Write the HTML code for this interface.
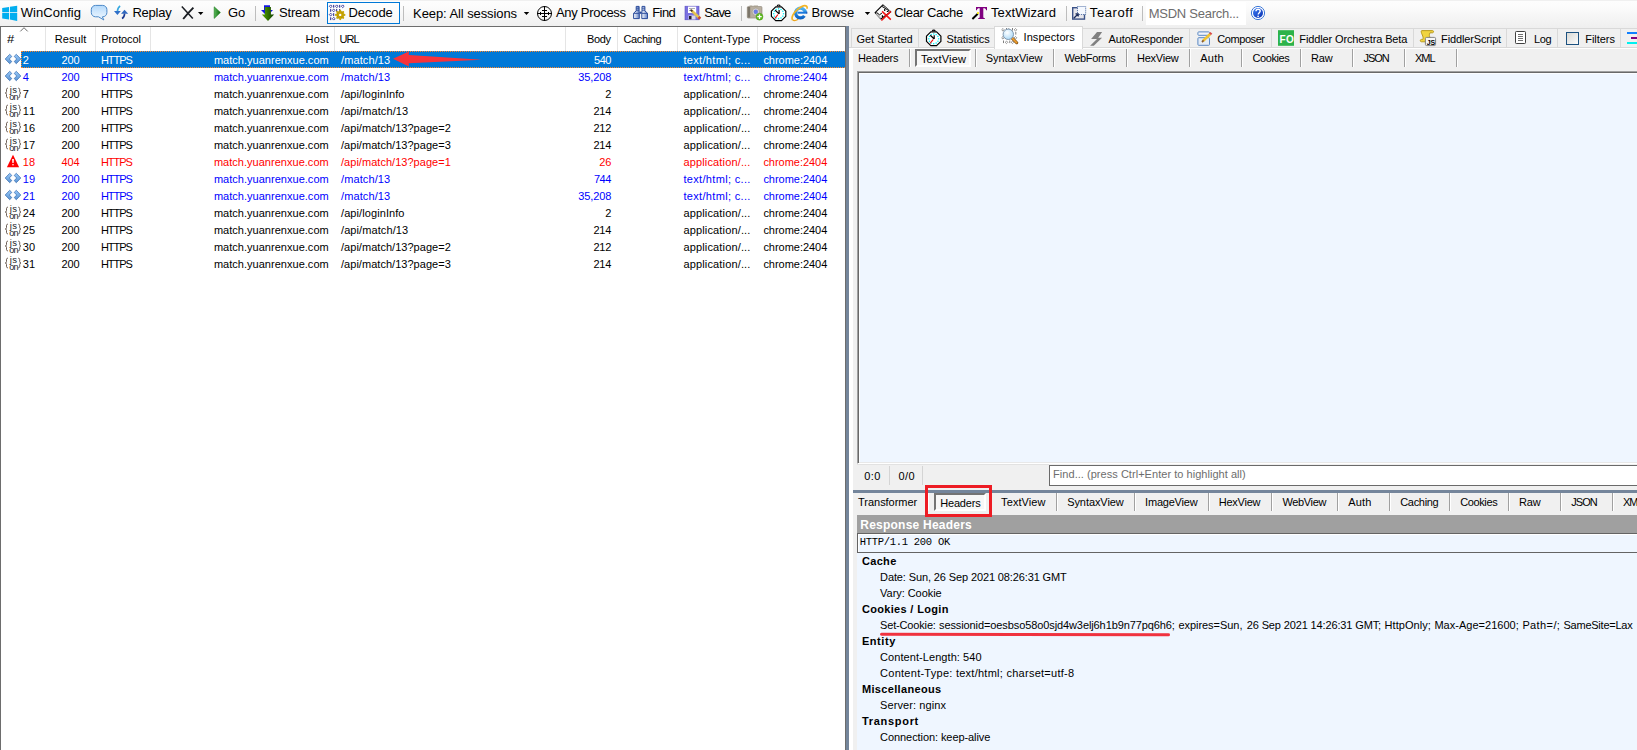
<!DOCTYPE html>
<html><head><meta charset="utf-8"><title>Fiddler</title><style>
html,body{margin:0;padding:0}
body{width:1637px;height:750px;overflow:hidden;position:relative;background:#f0f0f0;font-family:"Liberation Sans",sans-serif;font-size:11px;color:#000}
div,span,svg{position:absolute;box-sizing:border-box}
.t{white-space:pre;line-height:1}
#toolbar{left:0;top:0;width:1637px;height:28px;background:linear-gradient(#f0f0f0 0,#f0f0f0 1px,#fdfdfd 1.500px,#fbfbfb 8px,#f5f5f5 17px,#efefef 28px)}
.tsep{top:6px;width:1px;height:15px;background:#bdbdbd}
#decode{left:327px;top:2px;width:73px;height:22px;border:1px solid #0078d7;background:rgba(255,255,255,.4)}
#msdn{left:1146px;top:2px;width:100px;height:23px;background:#fff}
#list{left:0;top:26px;width:846px;height:730px;background:#fff}
#listb{left:0;top:26px;width:846px;height:730px;border:1px solid #6d6d6d;border-bottom:0}
.hsep{top:27px;width:1px;height:24px;background:#e5e5e5}
#sel{left:21px;top:51px;width:828px;height:17px;background:#0078d7;border:1px dotted #ff8728}
#vsplit{left:846px;top:26px;width:3px;height:724px;background:#74859b}
#page{left:849px;top:48px;width:800px;height:710px;background:#fff}
#inner{left:853px;top:49px;width:800px;height:710px;background:#f0f0f0}
.tab{top:28px;height:20px;border:1px solid #d9d9d9;border-bottom:0;background:#f0f0f0}
#tabline{left:849px;top:47px;width:800px;height:1px;background:#d9d9d9}
#tabsel{left:994px;top:26px;width:89px;height:23px;background:#fff;border:1px solid #d9d9d9;border-bottom:0}
.bs{width:2px;height:18px;border-left:1px solid #a0a0a0;border-right:1px solid #fff}
.r1{top:49px}.r2{top:493px}
.pressed{border:2px solid;border-color:#747474 #fff #fff #747474;background:#f7f7f7;box-shadow:inset 0 0 0 0 #000}
#ta{left:857px;top:71px;width:800px;height:393px;background:#eff6ff;border:1px solid #a0a0a0;border-right:0;border-bottom-color:#fff;box-shadow:inset 1px 1px 0 #696969,inset 0 -1px 0 #e8e8e8,inset 2px 2px 0 #fbfdff}
#stl{left:857px;top:464px;width:192px;height:1px;background:#e2e2e2}
.ssep{top:466px;width:1px;height:19px;background:#d4d4d4}
#find{left:1049px;top:465px;width:700px;height:21px;background:#fff;border:1px solid #6a6a6a}
#hsplit{left:853px;top:490px;width:800px;height:3px;background:#74859b}
#redbox{left:925px;top:485px;width:67px;height:32px;border:3px solid #ed1c24}
#rh{left:857px;top:515px;width:800px;height:19px;background:#a0a0a0}
#statusln{left:857px;top:533px;width:800px;height:20px;background:#eff6ff;border:1px solid #646464;border-right:0;box-shadow:inset 1px 1px 0 #fff}
#hdrs{left:857px;top:553px;width:800px;height:200px;background:#eff6ff}
#redline{left:880.400px;top:632.900px;width:290px;height:3.300px;border-radius:2px;background:#f0323f;transform:rotate(.08deg)}
</style></head><body>
<div id="toolbar"></div>
<div class="tsep" style="left:255px"></div>
<div class="tsep" style="left:403px"></div>
<div class="tsep" style="left:741px"></div>
<div class="tsep" style="left:1066px"></div>
<div class="tsep" style="left:1142px"></div>
<div id="decode"></div><div id="msdn"></div>
<div id="list"></div>
<div class="hsep" style="left:45px"></div>
<div class="hsep" style="left:95px"></div>
<div class="hsep" style="left:150px"></div>
<div class="hsep" style="left:334px"></div>
<div class="hsep" style="left:565px"></div>
<div class="hsep" style="left:617px"></div>
<div class="hsep" style="left:677px"></div>
<div class="hsep" style="left:757px"></div>
<svg style="left:19px;top:26px" width="10" height="6" viewBox="19 26 10 6"><path d="M20.300 31.400L24 27.700L27.700 31.400" fill="none" stroke="#6a6a6a" stroke-width="1"/></svg>
<div id="sel"></div>
<svg id="arrow" style="left:390px;top:50px" width="96" height="18" viewBox="390 50 96 18"><path d="M393 58.8 L408.8 51.4 L408.8 54.9 L482 59.7 L408.8 63.2 L408.8 66.4 Z" fill="#f8333a"/></svg>
<div id="listb"></div><div id="vsplit"></div>
<div class="tab" style="left:851px;width:68px"></div>
<div class="tab" style="left:918px;width:77px"></div>
<div class="tab" style="left:1082px;width:108px"></div>
<div class="tab" style="left:1189px;width:83px"></div>
<div class="tab" style="left:1271px;width:143px"></div>
<div class="tab" style="left:1413px;width:94px"></div>
<div class="tab" style="left:1506px;width:52px"></div>
<div class="tab" style="left:1557px;width:64px"></div>
<div class="tab" style="left:1620px;width:81px"></div>
<div id="tabline"></div><div id="page"></div><div id="inner"></div><div id="tabsel"></div>
<div class="bs r1" style="left:909px"></div>
<div class="bs r1" style="left:975px"></div>
<div class="bs r1" style="left:1053px"></div>
<div class="bs r1" style="left:1126px"></div>
<div class="bs r1" style="left:1189px"></div>
<div class="bs r1" style="left:1241px"></div>
<div class="bs r1" style="left:1300px"></div>
<div class="bs r1" style="left:1352px"></div>
<div class="bs r1" style="left:1404px"></div>
<div class="bs r1" style="left:1456px"></div>
<div class="pressed" style="left:915px;top:49px;width:56px;height:18px"></div>
<div id="ta"></div><div id="stl"></div>
<div class="ssep" style="left:889px"></div>
<div class="ssep" style="left:922px"></div>
<div id="find"></div><div id="hsplit"></div>
<div class="bs r2" style="left:927px"></div>
<div class="bs r2" style="left:990px"></div>
<div class="bs r2" style="left:1056px"></div>
<div class="bs r2" style="left:1134px"></div>
<div class="bs r2" style="left:1208px"></div>
<div class="bs r2" style="left:1271px"></div>
<div class="bs r2" style="left:1337px"></div>
<div class="bs r2" style="left:1389px"></div>
<div class="bs r2" style="left:1449px"></div>
<div class="bs r2" style="left:1508px"></div>
<div class="bs r2" style="left:1560px"></div>
<div class="bs r2" style="left:1612px"></div>
<div class="pressed" style="left:934px;top:493px;width:52px;height:18px"></div>
<div id="rh"></div><div id="statusln"></div><div id="hdrs"></div>
<svg id="tbicons" style="left:0;top:0" width="1637" height="26" viewBox="0 0 1637 26">
<defs>
<linearGradient id="gb" x1="0" y1="0" x2="0" y2="1"><stop offset="0" stop-color="#b4d9fb"/><stop offset="1" stop-color="#f4faff"/></linearGradient>
<linearGradient id="gg" x1="0" y1="0" x2="1" y2="0"><stop offset="0" stop-color="#58b858"/><stop offset="1" stop-color="#0f6a0f"/></linearGradient>
<linearGradient id="gs" x1="0" y1="0" x2="1" y2="0"><stop offset="0" stop-color="#58a800"/><stop offset="1" stop-color="#0c3c00"/></linearGradient>
<linearGradient id="gh" x1="0" y1="0" x2="1" y2="1"><stop offset="0" stop-color="#3a7cf5"/><stop offset="1" stop-color="#0a2fb0"/></linearGradient>
<linearGradient id="gbn" x1="0" y1="0" x2="1" y2="0"><stop offset="0" stop-color="#fff"/><stop offset="1" stop-color="#5f7fc4"/></linearGradient>
<linearGradient id="gie" x1="0" y1="0" x2="0" y2="1"><stop offset="0" stop-color="#4db4f4"/><stop offset="1" stop-color="#0d62c4"/></linearGradient>
</defs>
<g fill="#00adef"><path d="M2.2 7.9L9 6.9V12H2.2zM9.9 6.8L17.2 5.7V12H9.9zM2.2 12.8H9V19.4L2.2 18.5zM9.9 12.8H17.2V20.9L9.9 19.6z"/></g>
<path d="M95.5 5.4h7.2a4.2 4.2 0 0 1 4.2 4.2v3a4.2 4.2 0 0 1-4.2 4.2h-.4l1.6 3.2l-5.4-3.2h-3a4.2 4.2 0 0 1-4.2-4.2v-3a4.2 4.2 0 0 1 4.2-4.2z" fill="url(#gb)" stroke="#4a88c8" stroke-width="1"/>
<path d="M114 11h6.8l-3.4 4z" fill="#2f6fc8"/><path d="M117.4 11.2c.3-2.6 1-4.3 2.8-5.2" stroke="#36a8e0" stroke-width="1.6" fill="none"/>
<path d="M121 13.8h7.2l-3.7-4z" fill="#2f68c0"/><path d="M124.6 13.6c-.2 2.6-.8 4-2.6 4.9" stroke="#1c3a90" stroke-width="1.6" fill="none"/>
<path d="M181.8 6.6L192.8 18.4" stroke="#1a1d22" stroke-width="1.5"/><path d="M193.4 7.6C189 12 186 15.5 183.2 19" stroke="#1a1d22" stroke-width="1.9" fill="none"/>
<path d="M198 12h5.4l-2.7 3z" fill="#000"/>
<path d="M523.8 12h5.4l-2.7 3z" fill="#000"/>
<path d="M864.8 12h5.4l-2.7 3z" fill="#000"/>
<path d="M214.2 6.8V18.4L220.4 12.5z" fill="url(#gg)" stroke="#1a7a1a" stroke-width=".6"/>
<path d="M264 5.2h6v4.8h3l-6 6l-6-6h3z" fill="#1414e4"/>
<path d="M264.9 7h6v7.4h3.2l-6.1 6.6l-6.2-6.6h3.1z" fill="url(#gs)"/>
<path d="M330.7 4.9l1.4 1.4l-1.4 1.4l-1.4-1.4z" fill="none" stroke="#20208c" stroke-width=".8"/>
<path d="M333.7 4.9v2.8" stroke="#20208c" stroke-width="1"/>
<path d="M336.7 4.9l1.4 1.4l-1.4 1.4l-1.4-1.4z" fill="none" stroke="#20208c" stroke-width=".8"/>
<path d="M339.7 4.9v2.8" stroke="#20208c" stroke-width="1"/>
<path d="M342.7 4.9l1.4 1.4l-1.4 1.4l-1.4-1.4z" fill="none" stroke="#20208c" stroke-width=".8"/>
<path d="M330.7 9.0v2.8" stroke="#20208c" stroke-width="1"/>
<path d="M333.7 9.0l1.4 1.4l-1.4 1.4l-1.4-1.4z" fill="none" stroke="#20208c" stroke-width=".8"/>
<path d="M336.7 9.0v2.8" stroke="#20208c" stroke-width="1"/>
<path d="M339.7 9.0v2.8" stroke="#20208c" stroke-width="1"/>
<path d="M330.7 13.2l1.4 1.4l-1.4 1.4l-1.4-1.4z" fill="none" stroke="#20208c" stroke-width=".8"/>
<path d="M333.7 13.2v2.8" stroke="#20208c" stroke-width="1"/>
<path d="M330.7 17.3v2.8" stroke="#20208c" stroke-width="1"/>
<path d="M333.7 17.3l1.4 1.4l-1.4 1.4l-1.4-1.4z" fill="none" stroke="#20208c" stroke-width=".8"/>
<g transform="translate(340.2 14.9)"><circle r="3.6" fill="#c8a400" stroke="#8a6c00" stroke-width=".5"/>
<circle cx="4.20" cy="0.00" r="1.05" fill="#c9a800"/>
<circle cx="2.97" cy="2.97" r="1.05" fill="#c9a800"/>
<circle cx="0.00" cy="4.20" r="1.05" fill="#c9a800"/>
<circle cx="-2.97" cy="2.97" r="1.05" fill="#c9a800"/>
<circle cx="-4.20" cy="0.00" r="1.05" fill="#c9a800"/>
<circle cx="-2.97" cy="-2.97" r="1.05" fill="#c9a800"/>
<circle cx="-0.00" cy="-4.20" r="1.05" fill="#c9a800"/>
<circle cx="2.97" cy="-2.97" r="1.05" fill="#c9a800"/>
<circle r="1.2" fill="#fff"/></g>
<g stroke="#000" stroke-width="1" fill="none"><circle cx="544.5" cy="13.5" r="7"/><path d="M537 13.5h15M544.5 6v15M542 10.5h5M542 16.5h5M540.5 12v3M548.5 12v3"/></g>
<g stroke="#2b4c9b" stroke-width="1" fill="url(#gbn)" stroke-linejoin="round"><path d="M636.200 6.400h2.900v4.800l.2 2v5.400h-5.700v-5.400l2.600-2.300z"/><path d="M642 6.400h2.900v4.500l2.600 2.300v5.400h-5.700v-5.400l.2-2z"/></g><path d="M639.600 11.600h2.100v2.200h-2.100z" fill="#2b4c9b"/><path d="M636.200 8.200h2.900M636.200 10.200h2.900M642 8.200h2.900M642 10.200h2.900M633.800 13.400h5.400M641.900 13.400h5.400" stroke="#2b4c9b" stroke-width=".9"/>
<rect x="685" y="6.2" width="14" height="13.600" fill="#7a70e0" stroke="#5a50c0" stroke-width=".6"/><rect x="688" y="6.600" width="8.200" height="6.400" fill="#fff"/><path d="M689 8.500h6M689 10.500h4" stroke="#8a8a9a" stroke-width=".7"/><rect x="688.500" y="15.500" width="7" height="4" fill="#d8d8e8"/><rect x="689" y="16" width="2.500" height="3.300" fill="#202030"/>
<path d="M691.500 10.500L699.500 18" stroke="#e4c450" stroke-width="2.600"/><path d="M690.600 9.700l1.800 1.600" stroke="#403020" stroke-width="1.600"/><path d="M698.500 17l1.800 1.700" stroke="#c84830" stroke-width="2.800"/>
<rect x="747.300" y="6.500" width="14.700" height="11.600" rx="1" fill="#b8ae9e" stroke="#8c8478" stroke-width=".6"/><rect x="747.600" y="7" width="2.600" height="10.600" fill="#7c766a"/><rect x="749.500" y="5.500" width="3" height="1.400" fill="#a8a090"/><rect x="753.500" y="5.500" width="4.500" height="1.400" fill="#a8a090"/><circle cx="755.800" cy="11.800" r="3.700" fill="#d8d4cc" stroke="#98928a" stroke-width=".6"/><circle cx="755.800" cy="11.800" r="2.200" fill="#6c7ce4"/>
<circle cx="759.500" cy="16.700" r="3.500" fill="#5cb81e" stroke="#4a9a14" stroke-width=".4"/><path d="M757.300 16.700h4.400M759.500 14.500v4.400" stroke="#fff" stroke-width="1.300"/>
</svg>
<svg style="left:0;top:0" width="1637" height="50" viewBox="0 0 1637 50">
<g transform="translate(778.6 13.7)"><path d="M-2.900 -6.900h5.800l4.300 4.300v5.200l-4.300 4.300h-5.800l-4.300-4.300v-5.200z" fill="#fff" stroke="#000" stroke-width="1.200" stroke-linejoin="round"/><path d="M-1.400 -7.700c.3-1.300 2.500-1.300 3 0" stroke="#000" stroke-width="1.100" fill="none"/><rect x="-0.65" y="-5.55" width="1.300" height="1.300" fill="#00f0f8"/><rect x="1.80" y="-4.89" width="1.300" height="1.300" fill="#00f0f8"/><rect x="3.59" y="-3.10" width="1.300" height="1.300" fill="#00f0f8"/><rect x="4.25" y="-0.65" width="1.300" height="1.300" fill="#00f0f8"/><rect x="3.59" y="1.80" width="1.300" height="1.300" fill="#00f0f8"/><rect x="1.80" y="3.59" width="1.300" height="1.300" fill="#00f0f8"/><rect x="-0.65" y="4.25" width="1.300" height="1.300" fill="#00f0f8"/><rect x="-3.10" y="3.59" width="1.300" height="1.300" fill="#00f0f8"/><rect x="-4.89" y="1.80" width="1.300" height="1.300" fill="#00f0f8"/><rect x="-5.55" y="-0.65" width="1.300" height="1.300" fill="#00f0f8"/><rect x="-4.89" y="-3.10" width="1.300" height="1.300" fill="#00f0f8"/><rect x="-3.10" y="-4.89" width="1.300" height="1.300" fill="#00f0f8"/><path d="M.5 -3.600v3.800M.5 .2L-3.400 -3.500" stroke="#000" stroke-width="1.200" fill="none"/><path d="M-.6 .8L-3.800 4.700" stroke="#f00" stroke-width="1.100"/></g>
<g transform="translate(933.7 38.8)"><path d="M-2.900 -6.900h5.800l4.300 4.300v5.200l-4.300 4.300h-5.800l-4.300-4.300v-5.200z" fill="#fff" stroke="#000" stroke-width="1.200" stroke-linejoin="round"/><path d="M-1.400 -7.700c.3-1.300 2.500-1.300 3 0" stroke="#000" stroke-width="1.100" fill="none"/><rect x="-0.65" y="-5.55" width="1.300" height="1.300" fill="#00f0f8"/><rect x="1.80" y="-4.89" width="1.300" height="1.300" fill="#00f0f8"/><rect x="3.59" y="-3.10" width="1.300" height="1.300" fill="#00f0f8"/><rect x="4.25" y="-0.65" width="1.300" height="1.300" fill="#00f0f8"/><rect x="3.59" y="1.80" width="1.300" height="1.300" fill="#00f0f8"/><rect x="1.80" y="3.59" width="1.300" height="1.300" fill="#00f0f8"/><rect x="-0.65" y="4.25" width="1.300" height="1.300" fill="#00f0f8"/><rect x="-3.10" y="3.59" width="1.300" height="1.300" fill="#00f0f8"/><rect x="-4.89" y="1.80" width="1.300" height="1.300" fill="#00f0f8"/><rect x="-5.55" y="-0.65" width="1.300" height="1.300" fill="#00f0f8"/><rect x="-4.89" y="-3.10" width="1.300" height="1.300" fill="#00f0f8"/><rect x="-3.10" y="-4.89" width="1.300" height="1.300" fill="#00f0f8"/><path d="M.5 -3.600v3.800M.5 .2L-3.400 -3.500" stroke="#000" stroke-width="1.200" fill="none"/><path d="M-.6 .8L-3.800 4.700" stroke="#f00" stroke-width="1.100"/></g>
<g><path d="M805.300 12.500A4.900 4.900 0 1 0 804.400 15.900" stroke="url(#gie)" stroke-width="3.300" fill="none"/><path d="M797.500 12.700H806.900" stroke="#1a78dc" stroke-width="2"/><path d="M806.900 11.700v2" stroke="#0c3c9c" stroke-width=".8"/><path d="M792.600 20c-1.600-2.200 .6-7 5-10.600c3.400-2.800 7.300-4.400 9-3.200c.7.500.7 1.500.3 2.600" stroke="#f4b424" stroke-width="1.700" fill="none"/><path d="M792.700 20.100c1.200 1 3.400.5 5.600-.8" stroke="#eca41c" stroke-width="1.300" fill="none"/></g>
<path d="M882.900 4.900L890.800 11.800L880.800 19L875.100 12.700z" fill="#fafafa" stroke="#000" stroke-width="1.100" stroke-linejoin="round"/><path d="M882.700 6L889.700 11.200" stroke="#c4c4c4" stroke-width="1.400"/><path d="M876.300 13.600L880.900 18.300" stroke="#c8c8c8" stroke-width="1.500"/><path d="M881.900 6.400L889 10.700" stroke="#000" stroke-width=".9"/><path d="M876.400 12.300L879.500 14.800L881.900 13.100" stroke="#000" stroke-width="1" fill="none"/><path d="M884.700 9.100v1.900M882.400 15.300v1.700" stroke="#000" stroke-width="1.200"/><path d="M886.800 11.500h1.700" stroke="#000" stroke-width="1"/>
<path d="M882.100 11.400L890.800 19.600M890.800 11.400L881.400 20.500" stroke="#f01414" stroke-width="1.500"/>
<path d="M976 7h11v3.200h-.9c-.2-1.400-.8-2-2.600-2h-.2v8.800c0 .8.400 1 1.500 1.100v.9h-6.600v-.9c1.100-.1 1.500-.3 1.500-1.100V8.200h-.2c-1.800 0-2.400.6-2.600 2H976z" fill="#800080"/><path d="M972.400 19L977.800 13.800" stroke="#000" stroke-width="1.900"/><circle cx="978" cy="13.100" r="1.100" fill="#fff000"/>
<rect x="1072.700" y="7.700" width="11.800" height="11.400" fill="#e6e6ec" stroke="#3b5288" stroke-width="1.400"/><rect x="1077.500" y="6.500" width="8.200" height="8" fill="#f4f8ff" stroke="#4c6ca4" stroke-width="1" stroke-dasharray="1 1"/><path d="M1073.800 18.200L1078 14M1075.500 13.800h2.700v2.700" stroke="#1c2c5c" stroke-width="1.300" fill="none"/>
<circle cx="1258" cy="13" r="6.600" fill="#fff" stroke="#3c78d8" stroke-width="1"/><circle cx="1258" cy="13" r="5" fill="url(#gh)"/><path d="M1256 11.300c0-1.300.9-2.100 2.100-2.100c1.200 0 2.100.8 2.100 1.900c0 1.500-2 1.700-2 3.500" stroke="#fff" stroke-width="1.400" fill="none"/><circle cx="1258.100" cy="16.300" r=".85" fill="#fff"/>
<path d="M1003 28.5l1.300 1.300l-1.300 1.300l-1.300-1.300z" fill="none" stroke="#707070" stroke-width=".7"/>
<path d="M1006.5 28v2.600" stroke="#707070" stroke-width=".9"/>
<path d="M1009 28.5l1.300 1.300l-1.300 1.300l-1.300-1.300z" fill="none" stroke="#707070" stroke-width=".7"/>
<path d="M1012.5 28v2.600" stroke="#707070" stroke-width=".9"/>
<path d="M1015.5 28.5l1.300 1.300l-1.300 1.300l-1.300-1.300z" fill="none" stroke="#707070" stroke-width=".7"/>
<path d="M1015.8 32v2.600" stroke="#707070" stroke-width=".9"/>
<path d="M1015.5 36.5l1.300 1.300l-1.300 1.300l-1.300-1.300z" fill="none" stroke="#707070" stroke-width=".7"/>
<path d="M1003 36.5l1.300 1.300l-1.300 1.300l-1.300-1.300z" fill="none" stroke="#707070" stroke-width=".7"/>
<path d="M1003.5 40.5v2.600" stroke="#707070" stroke-width=".9"/>
<path d="M1006.5 41l1.300 1.300l-1.300 1.300l-1.300-1.300z" fill="none" stroke="#707070" stroke-width=".7"/>
<path d="M1009.8 40.5v2.600" stroke="#707070" stroke-width=".9"/>
<path d="M1012.5 41l1.300 1.300l-1.300 1.300l-1.300-1.300z" fill="none" stroke="#707070" stroke-width=".7"/>
<path d="M1012.200 38.200L1016.700 42.700" stroke="#7a4a10" stroke-width="3" stroke-linecap="round"/><path d="M1012.400 38.400L1016.600 42.600" stroke="#f0a030" stroke-width="1.700" stroke-linecap="round"/>
<radialGradient id="gl" cx=".4" cy=".35" r=".7"><stop offset="0" stop-color="#fff"/><stop offset="1" stop-color="#a8d8f8"/></radialGradient><circle cx="1008.300" cy="34.300" r="5.200" fill="url(#gl)" stroke="#8098b0" stroke-width="1"/>
<path d="M1102.100 32.100H1097L1091.100 39H1097L1090.100 45.800H1093.800L1102.100 37.700H1098.200z" fill="#808080"/>
<rect x="1197.900" y="31.900" width="11.600" height="3.400" rx=".8" fill="#f0f4fa" stroke="#5a88c4" stroke-width="1"/><rect x="1197.900" y="37.700" width="11.600" height="7.600" rx=".8" fill="#e4ecf6" stroke="#5a88c4" stroke-width="1"/><path d="M1203.200 40.800L1210.200 34" stroke="#f0c430" stroke-width="2.600"/><path d="M1210 34.200l1.400-1.400" stroke="#d84848" stroke-width="2.600"/><path d="M1202 42l1.600-1.600" stroke="#8a5a28" stroke-width="1.800"/>
<rect x="1278" y="30.200" width="16" height="15.600" fill="#2db34a"/>
<path d="M1422 30.600h10.500c1.400 0 1.400 2.200 0 2.200h-2.500c-1.200 1.800-.6 3.600.4 5.400c.9 1.800.2 3.600-1.400 3.600h-7.500c-1.600 0-1.600-2.400 0-2.400h1.300c.7-1.500.1-3-.5-4.400c-.8-1.700-1.800-4.400-.3-4.400z" fill="#f0d440" stroke="#b49414" stroke-width=".9"/>
<rect x="1425.400" y="37.400" width="10.200" height="8.200" rx="1.200" fill="#f6f6f6" stroke="#787878" stroke-width=".9"/>
<rect x="1515.500" y="31.500" width="10" height="12" rx=".8" fill="#fff" stroke="#404040" stroke-width="1"/><path d="M1518 34.500h5M1518 36.500h5M1518 38.500h5M1518 40.500h5" stroke="#707070" stroke-width="1"/>
<linearGradient id="gc" x1="0" y1="0" x2="1" y2="1"><stop offset="0" stop-color="#d8d8d4"/><stop offset="1" stop-color="#fdfdfd"/></linearGradient><rect x="1566.500" y="32.500" width="12" height="12" fill="url(#gc)" stroke="#1c5180" stroke-width="1"/>
<path d="M1627 33h10" stroke="#1080ff" stroke-width="2"/><path d="M1631 38h6" stroke="#800080" stroke-width="2"/><path d="M1627 43h10" stroke="#00f0f0" stroke-width="2"/>
</svg>
<span class="t" style="left:1279.600px;top:35px;font-size:10px;font-weight:700;color:#fff;letter-spacing:.2px">FO</span>
<span class="t" style="left:1426.800px;top:38.500px;font-size:7px;font-weight:700;color:#000;letter-spacing:-.1px">JS</span>
<svg style="left:0;top:0" width="24" height="280" viewBox="0 0 24 280"><defs><linearGradient id="gch" x1="0" y1="0" x2="0" y2="1"><stop offset="0" stop-color="#98c8f8"/><stop offset=".5" stop-color="#7ab0e8"/><stop offset="1" stop-color="#5a92d0"/></linearGradient>
<g id="ch"><path d="M5.200 8L9.700 3.300L11.800 5.400L9.300 8L11.800 10.600L9.700 12.700z" fill="url(#gch)" stroke="#3468ac" stroke-width=".7" stroke-linejoin="miter"/><path d="M20.800 8L16.300 3.300L14.200 5.400L16.700 8L14.200 10.600L16.300 12.700z" fill="url(#gch)" stroke="#3468ac" stroke-width=".7" stroke-linejoin="miter"/></g>
<g id="js"><path d="M8 3.200c-1.300 0-1.500.6-1.500 1.600v1.800c0 .9-.4 1.300-1.200 1.400c.8.100 1.200.5 1.200 1.400v1.800c0 1 .2 1.600 1.500 1.600" fill="none" stroke="#5a4a40" stroke-width=".9"/><path d="M18.200 3.200c1.300 0 1.500.6 1.500 1.600v1.800c0 .9.400 1.300 1.200 1.400c-.8.100-1.200.5-1.200 1.400v1.800c0 1-.2 1.600-1.500 1.600" fill="none" stroke="#5a4a40" stroke-width=".9"/></g>
<g id="warn"><path d="M13 1.800L19.100 14.200H6.900z" fill="#f00"/><path d="M12.100 6h1.800l-.3 4h-1.200z" fill="#fff"/><rect x="12.200" y="11.200" width="1.600" height="1.100" fill="#fff"/></g></defs>
<use href="#ch" y="51"/>
<use href="#ch" y="68"/>
<use href="#js" y="85"/>
<use href="#js" y="102"/>
<use href="#js" y="119"/>
<use href="#js" y="136"/>
<use href="#warn" y="153"/>
<use href="#ch" y="170"/>
<use href="#ch" y="187"/>
<use href="#js" y="204"/>
<use href="#js" y="221"/>
<use href="#js" y="238"/>
<use href="#js" y="255"/>
</svg>
<span class="t" style="left:9.800px;top:84.5px;font-size:9.500px;color:#1c1c28;letter-spacing:.3px">js</span><span class="t" style="left:9.300px;top:92.8px;font-size:9px;color:#1c1c28;letter-spacing:-.7px">on</span>
<span class="t" style="left:9.800px;top:101.5px;font-size:9.500px;color:#1c1c28;letter-spacing:.3px">js</span><span class="t" style="left:9.300px;top:109.8px;font-size:9px;color:#1c1c28;letter-spacing:-.7px">on</span>
<span class="t" style="left:9.800px;top:118.5px;font-size:9.500px;color:#1c1c28;letter-spacing:.3px">js</span><span class="t" style="left:9.300px;top:126.8px;font-size:9px;color:#1c1c28;letter-spacing:-.7px">on</span>
<span class="t" style="left:9.800px;top:135.5px;font-size:9.500px;color:#1c1c28;letter-spacing:.3px">js</span><span class="t" style="left:9.300px;top:143.8px;font-size:9px;color:#1c1c28;letter-spacing:-.7px">on</span>
<span class="t" style="left:9.800px;top:203.5px;font-size:9.500px;color:#1c1c28;letter-spacing:.3px">js</span><span class="t" style="left:9.300px;top:211.8px;font-size:9px;color:#1c1c28;letter-spacing:-.7px">on</span>
<span class="t" style="left:9.800px;top:220.5px;font-size:9.500px;color:#1c1c28;letter-spacing:.3px">js</span><span class="t" style="left:9.300px;top:228.8px;font-size:9px;color:#1c1c28;letter-spacing:-.7px">on</span>
<span class="t" style="left:9.800px;top:237.5px;font-size:9.500px;color:#1c1c28;letter-spacing:.3px">js</span><span class="t" style="left:9.300px;top:245.8px;font-size:9px;color:#1c1c28;letter-spacing:-.7px">on</span>
<span class="t" style="left:9.800px;top:254.5px;font-size:9.500px;color:#1c1c28;letter-spacing:.3px">js</span><span class="t" style="left:9.300px;top:262.8px;font-size:9px;color:#1c1c28;letter-spacing:-.7px">on</span>
<span class="t" style="left:20.8px;top:6px;font-size:13px;letter-spacing:0.029px">WinConfig</span>
<span class="t" style="left:132.4px;top:6px;font-size:13px;letter-spacing:-0.234px">Replay</span>
<span class="t" style="left:228.1px;top:6px;font-size:13px;letter-spacing:-0.144px">Go</span>
<span class="t" style="left:279.1px;top:6px;font-size:13px;letter-spacing:-0.201px">Stream</span>
<span class="t" style="left:348.4px;top:6px;font-size:13px;letter-spacing:-0.083px">Decode</span>
<span class="t" style="left:555.9px;top:6px;font-size:13px;letter-spacing:-0.278px">Any Process</span>
<span class="t" style="left:652.2px;top:6px;font-size:13px;letter-spacing:-0.566px">Find</span>
<span class="t" style="left:704.2px;top:6px;font-size:13px;letter-spacing:-0.847px">Save</span>
<span class="t" style="left:811.4px;top:6px;font-size:13px;letter-spacing:-0.112px">Browse</span>
<span class="t" style="left:894.2px;top:6px;font-size:13px;letter-spacing:-0.327px">Clear Cache</span>
<span class="t" style="left:991.0px;top:6px;font-size:13px;letter-spacing:0.078px">TextWizard</span>
<span class="t" style="left:1089.8px;top:6px;font-size:13px;letter-spacing:0.597px">Tearoff</span>
<span class="t" style="left:413.1px;top:7px;font-size:13px;letter-spacing:-0.089px">Keep: All sessions</span>
<span class="t" style="left:1148.8px;top:7px;font-size:13px;color:#6d6d6d;letter-spacing:-0.271px">MSDN Search...</span>
<span class="t" style="left:7.2px;top:34px;transform:scaleX(1.18);transform-origin:0 0">#</span>
<span class="t" style="left:54.8px;top:34px;letter-spacing:0.082px">Result</span>
<span class="t" style="left:101.3px;top:34px;letter-spacing:-0.094px">Protocol</span>
<span class="t" style="left:305.6px;top:34px;letter-spacing:0.192px">Host</span>
<span class="t" style="left:339.6px;top:34px;letter-spacing:-1.000px">URL</span>
<span class="t" style="left:587.0px;top:34px;letter-spacing:-0.326px">Body</span>
<span class="t" style="left:623.5px;top:34px;letter-spacing:-0.360px">Caching</span>
<span class="t" style="left:683.4px;top:34px;letter-spacing:0.068px">Content-Type</span>
<span class="t" style="left:762.9px;top:34px;letter-spacing:-0.408px">Process</span>
<span class="t" style="left:856.4px;top:34px">Get Started</span>
<span class="t" style="left:946.6px;top:34px;letter-spacing:-0.102px">Statistics</span>
<span class="t" style="left:1108.6px;top:34px;letter-spacing:-0.154px">AutoResponder</span>
<span class="t" style="left:1217.3px;top:34px;letter-spacing:-0.436px">Composer</span>
<span class="t" style="left:1299.3px;top:34px;letter-spacing:-0.122px">Fiddler Orchestra Beta</span>
<span class="t" style="left:1441.1px;top:34px;letter-spacing:-0.138px">FiddlerScript</span>
<span class="t" style="left:1534.1px;top:34px;letter-spacing:-0.430px">Log</span>
<span class="t" style="left:1585.3px;top:34px;letter-spacing:-0.059px">Filters</span>
<span class="t" style="left:1023.6px;top:32px;letter-spacing:0.050px">Inspectors</span>
<span class="t" style="left:858.1px;top:53px;letter-spacing:-0.180px">Headers</span>
<span class="t" style="left:985.7px;top:53px;letter-spacing:-0.065px">SyntaxView</span>
<span class="t" style="left:1064.4px;top:53px;letter-spacing:-0.313px">WebForms</span>
<span class="t" style="left:1137.1px;top:53px;letter-spacing:-0.270px">HexView</span>
<span class="t" style="left:1200.2px;top:53px;letter-spacing:0.253px">Auth</span>
<span class="t" style="left:1252.4px;top:53px;letter-spacing:-0.392px">Cookies</span>
<span class="t" style="left:1311.1px;top:53px;letter-spacing:-0.258px">Raw</span>
<span class="t" style="left:1363.4px;top:53px;letter-spacing:-1.000px">JSON</span>
<span class="t" style="left:1415.0px;top:53px;letter-spacing:-1.000px">XML</span>
<span class="t" style="left:920.9px;top:54px;letter-spacing:0.182px">TextView</span>
<span class="t" style="left:864.2px;top:471px;letter-spacing:0.452px">0:0</span>
<span class="t" style="left:898.5px;top:471px;letter-spacing:0.452px">0/0</span>
<span class="t" style="left:1053.1px;top:469px;color:#6d6d6d;letter-spacing:0.037px">Find... (press Ctrl+Enter to highlight all)</span>
<span class="t" style="left:858.1px;top:497px;letter-spacing:-0.040px">Transformer</span>
<span class="t" style="left:1001.1px;top:497px;letter-spacing:0.082px">TextView</span>
<span class="t" style="left:1067.2px;top:497px;letter-spacing:-0.076px">SyntaxView</span>
<span class="t" style="left:1145.1px;top:497px;letter-spacing:-0.215px">ImageView</span>
<span class="t" style="left:1218.8px;top:497px;letter-spacing:-0.253px">HexView</span>
<span class="t" style="left:1282.5px;top:497px;letter-spacing:-0.360px">WebView</span>
<span class="t" style="left:1348.3px;top:497px;letter-spacing:0.186px">Auth</span>
<span class="t" style="left:1400.2px;top:497px;letter-spacing:-0.310px">Caching</span>
<span class="t" style="left:1460.2px;top:497px;letter-spacing:-0.375px">Cookies</span>
<span class="t" style="left:1519.0px;top:497px;letter-spacing:-0.208px">Raw</span>
<span class="t" style="left:1571.3px;top:497px;letter-spacing:-1.000px">JSON</span>
<span class="t" style="left:1622.9px;top:497px;letter-spacing:-1.000px">XML</span>
<span class="t" style="left:940.2px;top:498px;letter-spacing:-0.180px">Headers</span>
<span class="t" style="left:860.3px;top:519px;font-size:12px;font-weight:700;color:#fff;letter-spacing:0.230px">Response Headers</span>
<span class="t" style="left:859.8px;top:537px;font-size:10.5px;color:#000;font-family:'Liberation Mono',monospace;letter-spacing:-0.294px">HTTP/1.1 200 OK</span>
<span class="t" style="left:861.9px;top:556px;font-weight:700;letter-spacing:0.342px">Cache</span>
<span class="t" style="left:861.9px;top:604px;font-weight:700;letter-spacing:0.328px">Cookies / Login</span>
<span class="t" style="left:861.9px;top:636px;font-weight:700;letter-spacing:0.588px">Entity</span>
<span class="t" style="left:861.9px;top:684px;font-weight:700;letter-spacing:0.341px">Miscellaneous</span>
<span class="t" style="left:861.9px;top:716px;font-weight:700;letter-spacing:0.708px">Transport</span>
<span class="t" style="left:880.1px;top:572px;letter-spacing:-0.120px">Date: Sun, 26 Sep 2021 08:26:31 GMT</span>
<span class="t" style="left:880.1px;top:588px;letter-spacing:-0.051px">Vary: Cookie</span>
<span class="t" style="left:880.1px;top:652px;letter-spacing:0.066px">Content-Length: 540</span>
<span class="t" style="left:880.1px;top:668px;letter-spacing:0.261px">Content-Type: text/html; charset=utf-8</span>
<span class="t" style="left:880.1px;top:700px;letter-spacing:0.091px">Server: nginx</span>
<span class="t" style="left:880.1px;top:732px;letter-spacing:-0.076px">Connection: keep-alive</span>
<span class="t" style="left:880.1px;top:620px;letter-spacing:-0.168px">Set-Cookie:</span>
<span class="t" style="left:939.0px;top:620px;letter-spacing:-0.099px">sessionid=oesbso58o0sjd4w3elj6h1b9n77pq6h6;</span>
<span class="t" style="left:1178.4px;top:620px;letter-spacing:-0.038px">expires=Sun,</span>
<span class="t" style="left:1246.8px;top:620px;letter-spacing:-0.138px">26 Sep 2021 14:26:31 GMT;</span>
<span class="t" style="left:1384.6px;top:620px;letter-spacing:0.043px">HttpOnly;</span>
<span class="t" style="left:1434.4px;top:620px;letter-spacing:0.024px">Max-Age=21600;</span>
<span class="t" style="left:1522.4px;top:620px;letter-spacing:0.388px">Path=/;</span>
<span class="t" style="left:1563.5px;top:620px;letter-spacing:-0.242px">SameSite=Lax</span>
<span class="t" style="left:22.8px;top:55px;color:#fff">2</span>
<span class="t" style="left:61.6px;top:55px;color:#fff;letter-spacing:-0.180px">200</span>
<span class="t" style="left:100.9px;top:55px;color:#fff;letter-spacing:-1.000px">HTTPS</span>
<span class="t" style="left:213.9px;top:55px;color:#fff;letter-spacing:0.024px">match.yuanrenxue.com</span>
<span class="t" style="left:341.0px;top:55px;color:#fff;letter-spacing:0.111px">/match/13</span>
<span class="t" style="left:594.1px;top:55px;color:#fff;letter-spacing:-0.530px">540</span>
<span class="t" style="left:683.4px;top:55px;color:#fff;letter-spacing:0.331px">text/html; c...</span>
<span class="t" style="left:763.4px;top:55px;color:#fff;letter-spacing:-0.032px">chrome:2404</span>
<span class="t" style="left:22.8px;top:72px;color:#0000ff">4</span>
<span class="t" style="left:61.6px;top:72px;color:#0000ff;letter-spacing:-0.180px">200</span>
<span class="t" style="left:100.9px;top:72px;color:#0000ff;letter-spacing:-1.000px">HTTPS</span>
<span class="t" style="left:213.9px;top:72px;color:#0000ff;letter-spacing:0.024px">match.yuanrenxue.com</span>
<span class="t" style="left:341.0px;top:72px;color:#0000ff;letter-spacing:0.111px">/match/13</span>
<span class="t" style="left:578.2px;top:72px;color:#0000ff;letter-spacing:-0.091px">35,208</span>
<span class="t" style="left:683.4px;top:72px;color:#0000ff;letter-spacing:0.331px">text/html; c...</span>
<span class="t" style="left:763.4px;top:72px;color:#0000ff;letter-spacing:-0.032px">chrome:2404</span>
<span class="t" style="left:22.8px;top:89px;color:#000">7</span>
<span class="t" style="left:61.6px;top:89px;color:#000;letter-spacing:-0.180px">200</span>
<span class="t" style="left:100.9px;top:89px;color:#000;letter-spacing:-1.000px">HTTPS</span>
<span class="t" style="left:213.9px;top:89px;color:#000;letter-spacing:0.024px">match.yuanrenxue.com</span>
<span class="t" style="left:341.0px;top:89px;color:#000;letter-spacing:0.085px">/api/loginInfo</span>
<span class="t" style="left:605.3px;top:89px;color:#000">2</span>
<span class="t" style="left:683.4px;top:89px;color:#000;letter-spacing:0.155px">application/...</span>
<span class="t" style="left:763.4px;top:89px;color:#000;letter-spacing:-0.032px">chrome:2404</span>
<span class="t" style="left:22.8px;top:106px;color:#000;letter-spacing:0.978px">11</span>
<span class="t" style="left:61.6px;top:106px;color:#000;letter-spacing:-0.180px">200</span>
<span class="t" style="left:100.9px;top:106px;color:#000;letter-spacing:-1.000px">HTTPS</span>
<span class="t" style="left:213.9px;top:106px;color:#000;letter-spacing:0.024px">match.yuanrenxue.com</span>
<span class="t" style="left:341.0px;top:106px;color:#000;letter-spacing:0.088px">/api/match/13</span>
<span class="t" style="left:593.4px;top:106px;color:#000;letter-spacing:-0.180px">214</span>
<span class="t" style="left:683.4px;top:106px;color:#000;letter-spacing:0.155px">application/...</span>
<span class="t" style="left:763.4px;top:106px;color:#000;letter-spacing:-0.032px">chrome:2404</span>
<span class="t" style="left:22.8px;top:123px;color:#000;letter-spacing:0.150px">16</span>
<span class="t" style="left:61.6px;top:123px;color:#000;letter-spacing:-0.180px">200</span>
<span class="t" style="left:100.9px;top:123px;color:#000;letter-spacing:-1.000px">HTTPS</span>
<span class="t" style="left:213.9px;top:123px;color:#000;letter-spacing:0.024px">match.yuanrenxue.com</span>
<span class="t" style="left:341.0px;top:123px;color:#000;letter-spacing:0.033px">/api/match/13?page=2</span>
<span class="t" style="left:593.4px;top:123px;color:#000;letter-spacing:-0.180px">212</span>
<span class="t" style="left:683.4px;top:123px;color:#000;letter-spacing:0.155px">application/...</span>
<span class="t" style="left:763.4px;top:123px;color:#000;letter-spacing:-0.032px">chrome:2404</span>
<span class="t" style="left:22.8px;top:140px;color:#000;letter-spacing:0.150px">17</span>
<span class="t" style="left:61.6px;top:140px;color:#000;letter-spacing:-0.180px">200</span>
<span class="t" style="left:100.9px;top:140px;color:#000;letter-spacing:-1.000px">HTTPS</span>
<span class="t" style="left:213.9px;top:140px;color:#000;letter-spacing:0.024px">match.yuanrenxue.com</span>
<span class="t" style="left:341.0px;top:140px;color:#000;letter-spacing:0.033px">/api/match/13?page=3</span>
<span class="t" style="left:593.4px;top:140px;color:#000;letter-spacing:-0.180px">214</span>
<span class="t" style="left:683.4px;top:140px;color:#000;letter-spacing:0.155px">application/...</span>
<span class="t" style="left:763.4px;top:140px;color:#000;letter-spacing:-0.032px">chrome:2404</span>
<span class="t" style="left:22.8px;top:157px;color:#ff0000;letter-spacing:0.150px">18</span>
<span class="t" style="left:61.6px;top:157px;color:#ff0000;letter-spacing:-0.180px">404</span>
<span class="t" style="left:100.9px;top:157px;color:#ff0000;letter-spacing:-1.000px">HTTPS</span>
<span class="t" style="left:213.9px;top:157px;color:#ff0000;letter-spacing:0.024px">match.yuanrenxue.com</span>
<span class="t" style="left:341.0px;top:157px;color:#ff0000;letter-spacing:0.033px">/api/match/13?page=1</span>
<span class="t" style="left:599.3px;top:157px;color:#ff0000;letter-spacing:-0.150px">26</span>
<span class="t" style="left:683.4px;top:157px;color:#ff0000;letter-spacing:0.155px">application/...</span>
<span class="t" style="left:763.4px;top:157px;color:#ff0000;letter-spacing:-0.032px">chrome:2404</span>
<span class="t" style="left:22.8px;top:174px;color:#0000ff;letter-spacing:0.150px">19</span>
<span class="t" style="left:61.6px;top:174px;color:#0000ff;letter-spacing:-0.180px">200</span>
<span class="t" style="left:100.9px;top:174px;color:#0000ff;letter-spacing:-1.000px">HTTPS</span>
<span class="t" style="left:213.9px;top:174px;color:#0000ff;letter-spacing:0.024px">match.yuanrenxue.com</span>
<span class="t" style="left:341.0px;top:174px;color:#0000ff;letter-spacing:0.111px">/match/13</span>
<span class="t" style="left:593.9px;top:174px;color:#0000ff;letter-spacing:-0.430px">744</span>
<span class="t" style="left:683.4px;top:174px;color:#0000ff;letter-spacing:0.331px">text/html; c...</span>
<span class="t" style="left:763.4px;top:174px;color:#0000ff;letter-spacing:-0.032px">chrome:2404</span>
<span class="t" style="left:22.8px;top:191px;color:#0000ff;letter-spacing:0.150px">21</span>
<span class="t" style="left:61.6px;top:191px;color:#0000ff;letter-spacing:-0.180px">200</span>
<span class="t" style="left:100.9px;top:191px;color:#0000ff;letter-spacing:-1.000px">HTTPS</span>
<span class="t" style="left:213.9px;top:191px;color:#0000ff;letter-spacing:0.024px">match.yuanrenxue.com</span>
<span class="t" style="left:341.0px;top:191px;color:#0000ff;letter-spacing:0.111px">/match/13</span>
<span class="t" style="left:578.2px;top:191px;color:#0000ff;letter-spacing:-0.091px">35,208</span>
<span class="t" style="left:683.4px;top:191px;color:#0000ff;letter-spacing:0.331px">text/html; c...</span>
<span class="t" style="left:763.4px;top:191px;color:#0000ff;letter-spacing:-0.032px">chrome:2404</span>
<span class="t" style="left:22.8px;top:208px;color:#000;letter-spacing:0.150px">24</span>
<span class="t" style="left:61.6px;top:208px;color:#000;letter-spacing:-0.180px">200</span>
<span class="t" style="left:100.9px;top:208px;color:#000;letter-spacing:-1.000px">HTTPS</span>
<span class="t" style="left:213.9px;top:208px;color:#000;letter-spacing:0.024px">match.yuanrenxue.com</span>
<span class="t" style="left:341.0px;top:208px;color:#000;letter-spacing:0.085px">/api/loginInfo</span>
<span class="t" style="left:605.3px;top:208px;color:#000">2</span>
<span class="t" style="left:683.4px;top:208px;color:#000;letter-spacing:0.155px">application/...</span>
<span class="t" style="left:763.4px;top:208px;color:#000;letter-spacing:-0.032px">chrome:2404</span>
<span class="t" style="left:22.8px;top:225px;color:#000;letter-spacing:0.150px">25</span>
<span class="t" style="left:61.6px;top:225px;color:#000;letter-spacing:-0.180px">200</span>
<span class="t" style="left:100.9px;top:225px;color:#000;letter-spacing:-1.000px">HTTPS</span>
<span class="t" style="left:213.9px;top:225px;color:#000;letter-spacing:0.024px">match.yuanrenxue.com</span>
<span class="t" style="left:341.0px;top:225px;color:#000;letter-spacing:0.088px">/api/match/13</span>
<span class="t" style="left:593.4px;top:225px;color:#000;letter-spacing:-0.180px">214</span>
<span class="t" style="left:683.4px;top:225px;color:#000;letter-spacing:0.155px">application/...</span>
<span class="t" style="left:763.4px;top:225px;color:#000;letter-spacing:-0.032px">chrome:2404</span>
<span class="t" style="left:22.8px;top:242px;color:#000;letter-spacing:0.150px">30</span>
<span class="t" style="left:61.6px;top:242px;color:#000;letter-spacing:-0.180px">200</span>
<span class="t" style="left:100.9px;top:242px;color:#000;letter-spacing:-1.000px">HTTPS</span>
<span class="t" style="left:213.9px;top:242px;color:#000;letter-spacing:0.024px">match.yuanrenxue.com</span>
<span class="t" style="left:341.0px;top:242px;color:#000;letter-spacing:0.033px">/api/match/13?page=2</span>
<span class="t" style="left:593.4px;top:242px;color:#000;letter-spacing:-0.180px">212</span>
<span class="t" style="left:683.4px;top:242px;color:#000;letter-spacing:0.155px">application/...</span>
<span class="t" style="left:763.4px;top:242px;color:#000;letter-spacing:-0.032px">chrome:2404</span>
<span class="t" style="left:22.8px;top:259px;color:#000;letter-spacing:0.150px">31</span>
<span class="t" style="left:61.6px;top:259px;color:#000;letter-spacing:-0.180px">200</span>
<span class="t" style="left:100.9px;top:259px;color:#000;letter-spacing:-1.000px">HTTPS</span>
<span class="t" style="left:213.9px;top:259px;color:#000;letter-spacing:0.024px">match.yuanrenxue.com</span>
<span class="t" style="left:341.0px;top:259px;color:#000;letter-spacing:0.033px">/api/match/13?page=3</span>
<span class="t" style="left:593.4px;top:259px;color:#000;letter-spacing:-0.180px">214</span>
<span class="t" style="left:683.4px;top:259px;color:#000;letter-spacing:0.155px">application/...</span>
<span class="t" style="left:763.4px;top:259px;color:#000;letter-spacing:-0.032px">chrome:2404</span>
<div id="redline"></div><div id="redbox"></div>
</body></html>
